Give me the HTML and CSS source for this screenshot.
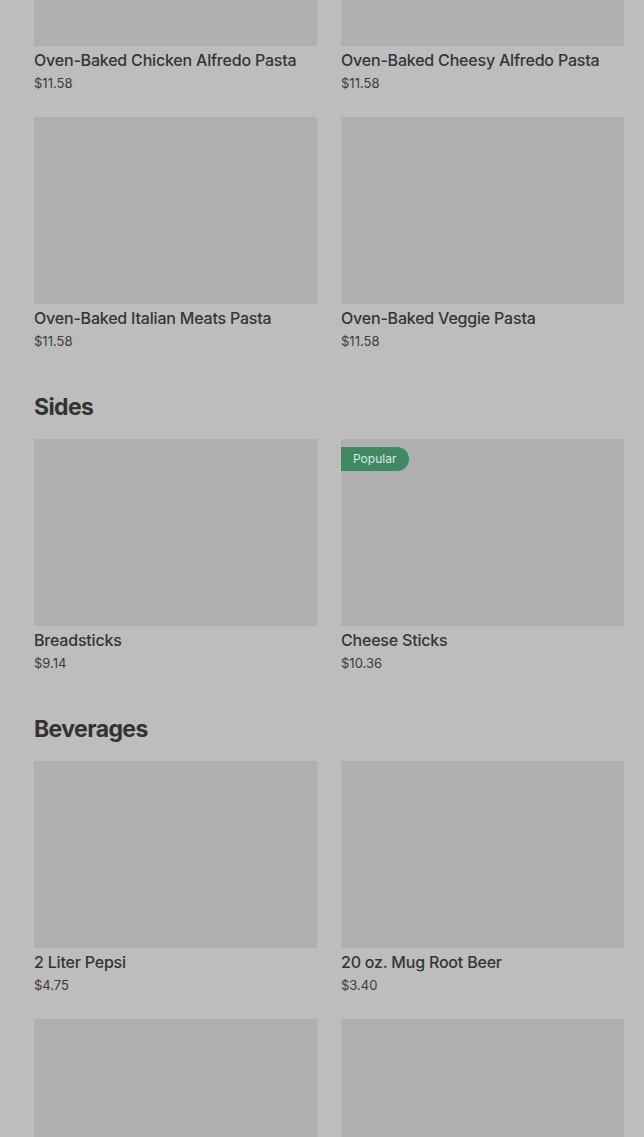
FILE: index.html
```
<!DOCTYPE html>
<html>
<head>
	<title>Menu</title>
	<link rel="stylesheet" href="styles.css">
</head>
<body>
	<div class="menu">
		<section class="section section_first">
			<div class="grid">
				<div class="item">
					<div class="item_image"></div>
					<div class="item_title">Oven-Baked Chicken Alfredo Pasta</div>
					<div class="item_price">$11.58</div>
				</div>
				<div class="item">
					<div class="item_image"></div>
					<div class="item_title">Oven-Baked Cheesy Alfredo Pasta</div>
					<div class="item_price">$11.58</div>
				</div>
				<div class="item">
					<div class="item_image"></div>
					<div class="item_title">Oven-Baked Italian Meats Pasta</div>
					<div class="item_price">$11.58</div>
				</div>
				<div class="item">
					<div class="item_image"></div>
					<div class="item_title">Oven-Baked Veggie Pasta</div>
					<div class="item_price">$11.58</div>
				</div>
			</div>
		</section>

		<section class="section">
			<h2 class="section_title">Sides</h2>
			<div class="grid">
				<div class="item">
					<div class="item_image"></div>
					<div class="item_title">Breadsticks</div>
					<div class="item_price">$9.14</div>
				</div>
				<div class="item">
					<div class="item_image">
						<span class="badge">Popular</span>
					</div>
					<div class="item_title">Cheese Sticks</div>
					<div class="item_price">$10.36</div>
				</div>
			</div>
		</section>

		<section class="section">
			<h2 class="section_title">Beverages</h2>
			<div class="grid">
				<div class="item">
					<div class="item_image"></div>
					<div class="item_title">2 Liter Pepsi</div>
					<div class="item_price">$4.75</div>
				</div>
				<div class="item">
					<div class="item_image"></div>
					<div class="item_title">20 oz. Mug Root Beer</div>
					<div class="item_price">$3.40</div>
				</div>
				<div class="item">
					<div class="item_image"></div>
					<div class="item_title">Pepsi</div>
					<div class="item_price">$2.50</div>
				</div>
				<div class="item">
					<div class="item_image"></div>
					<div class="item_title">Diet Pepsi</div>
					<div class="item_price">$2.50</div>
				</div>
			</div>
		</section>
	</div>
</body>
</html>
```

FILE: styles.css
```
/* Menu list, dimmed behind an overlay */

html, body { margin: 0; padding: 0; }
body { background: #bdbdbd; font-family: Inter, "Noto Sans", sans-serif; color: #333; overflow: hidden; }

.menu { padding: 0 20px 0 34px; }

.section { margin-top: 40px; }
.section_first { margin-top: -141px; }
.section_title { margin: 0 0 17px; font-size: 23px; line-height: 30px; font-weight: 700; letter-spacing: -0.6px; color: #333; }

.grid { display: grid; grid-template-columns: 283px 283px; column-gap: 24px; row-gap: 23px; }

.item_image { position: relative; height: 187px; background: #afafaf; }
.item_title { margin-top: 2px; font-size: 16px; line-height: 24px; font-weight: 500; letter-spacing: -0.2px; color: #353535; white-space: nowrap; }
.item_price { margin-top: 1px; font-size: 13px; line-height: 21px; color: #3c3c3c; }

.badge { position: absolute; left: 0; top: 8px; height: 24px; padding: 0 12px 0 12px; min-width: 44px; line-height: 24px; font-size: 12px; color: #dce8e1; background: #3f8a63; border-radius: 0 12px 12px 0; }
```
